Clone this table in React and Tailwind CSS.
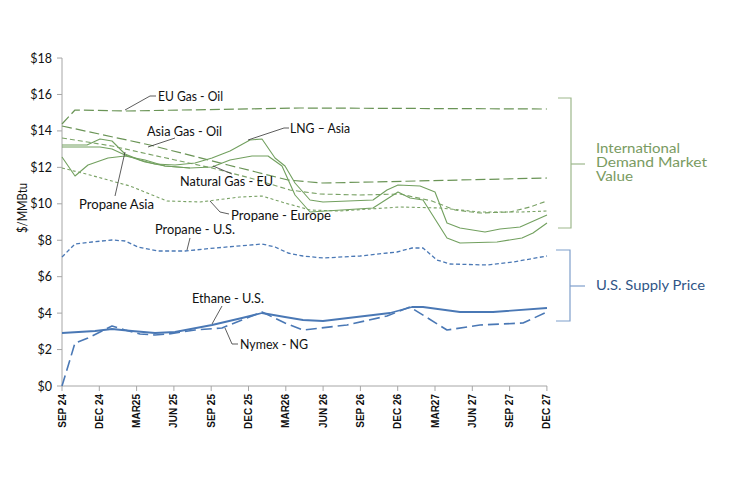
import React from "react";

// pixel points traced from the chart (x, y)
const series = [
  // green dashed
  { id: "euGasOil", color: "#6a9456", width: 1.2, dash: "10 4",
    pts: [[62,124],[75,110],[125,111],[300,108],[547,109]] },
  { id: "asiaGasOil", color: "#6a9456", width: 1.2, dash: "10 4",
    pts: [[62,126],[150,145],[228,165],[288,180],[322,183],[373,182],[547,178]] },
  { id: "natGasEu", color: "#7aa266", width: 1.1, dash: "5 3",
    pts: [[62,138],[112,146],[175,160],[212,168],[250,178],[290,190],[320,194],[360,195],[400,194],[432,201],[455,210],[480,213],[510,212],[530,207],[547,201]] },
  { id: "propaneEurope", color: "#7aa266", width: 1.1, dash: "3 2.5",
    pts: [[62,168],[90,175],[130,186],[167,201],[200,202],[240,197],[262,196],[285,203],[310,210],[340,211],[400,207],[440,208],[480,212],[520,212],[547,211]] },
  // green solid
  { id: "lngAsia", color: "#72a05f", width: 1.1,
    pts: [[62,145],[87,145],[100,139],[112,141],[125,154],[140,160],[155,164],[175,165],[195,163],[212,158],[230,151],[250,140],[262,139],[275,158],[285,166],[295,183],[310,200],[323,202],[373,200],[387,190],[398,185],[420,186],[435,192],[447,223],[460,228],[485,232],[500,229],[520,227],[547,215]] },
  { id: "propaneAsia", color: "#72a05f", width: 1.1,
    pts: [[62,157],[75,176],[88,165],[108,158],[125,156],[145,160],[165,166],[190,168],[212,167],[230,160],[252,156],[268,156],[282,166],[295,195],[310,212],[373,208],[398,192],[410,198],[423,200],[447,238],[460,243],[497,242],[522,238],[533,233],[547,223]] },
  { id: "natGasSolid", color: "#72a05f", width: 1.1,
    pts: [[62,147],[100,147],[112,149],[125,155],[145,162],[165,166],[190,168]] },
  // blue
  { id: "propaneUs", color: "#4a78b5", width: 1.3, dash: "4 2.5",
    pts: [[62,257],[75,244],[92,242],[112,240],[125,241],[138,247],[158,251],[185,251],[215,248],[262,244],[275,247],[288,253],[303,256],[323,258],[360,256],[397,252],[412,248],[423,248],[437,260],[450,264],[487,265],[513,262],[547,256]] },
  { id: "nymex", color: "#4a78b5", width: 1.6, dash: "11 5",
    pts: [[62,386],[75,343],[88,338],[102,331],[112,326],[125,330],[140,334],[155,335],[168,334],[195,330],[222,328],[242,320],[262,312],[285,323],[303,330],[347,325],[387,316],[410,307],[447,330],[480,325],[523,323],[547,312]] },
  { id: "ethane", color: "#4a78b5", width: 1.8,
    pts: [[62,333],[95,331],[112,329],[132,331],[155,333],[175,332],[212,325],[242,318],[262,313],[285,317],[303,320],[323,321],[390,313],[412,307],[423,307],[460,312],[493,312],[547,308]] },
];

const xLabels = ["SEP 24","DEC 24","MAR25","JUN 25","SEP 25","DEC 25","MAR26","JUN 26","SEP 26","DEC 26","MAR27","JUN 27","SEP 27","DEC 27"];

const notes = [
  { text: "EU Gas - Oil", x: 158, y: 101, w: 65, lead: "125,110 150,96 156,96" },
  { text: "Asia Gas - Oil", x: 147, y: 136, w: 75, lead: "148,147 175,138" },
  { text: "LNG \u2013 Asia", x: 290, y: 133, w: 60, lead: "248,140 284,128 289,128" },
  { text: "Natural Gas - EU", x: 180, y: 186, w: 93, lead: "213,166 232,174" },
  { text: "Propane Asia", x: 79, y: 209, w: 75, lead: "115,196 125,152" },
  { text: "Propane - Europe", x: 231, y: 220, w: 100, lead: "210,201 220,212 229,214" },
  { text: "Propane - U.S.", x: 155, y: 234, w: 80, lead: "190,238 187,250" },
  { text: "Ethane - U.S.", x: 192, y: 303, w: 72, lead: "222,306 212,324" },
  { text: "Nymex - NG", x: 240, y: 349, w: 68, lead: "225,328 232,344 238,344" },
];

const font = "'Lato', 'Open Sans', sans-serif";

export default function App() {
  const yTicks = Array.from({ length: 10 }, (_, k) => 386 - k * 36.44);
  const xTicks = Array.from({ length: 14 }, (_, k) => 62 + k * 37.3);

  return (
    <div className="w-[731px] h-[483px] bg-white overflow-hidden">
      <svg width="731" height="483" viewBox="0 0 731 483" className="block">
        {/* axes */}
        <line x1="62" y1="58" x2="62" y2="386" stroke="#a6a6a6" strokeWidth="1" />
        <line x1="62" y1="386" x2="547" y2="386" stroke="#a6a6a6" strokeWidth="1" />
        {yTicks.map((y, k) => (
          <g key={k}>
            <line x1="57" y1={y} x2="62" y2={y} stroke="#a6a6a6" />
            <text x="52" y={y + 4.5} textAnchor="end" fontSize="12.5" fontFamily={font} fill="#111">
              {"$" + k * 2}
            </text>
          </g>
        ))}
        {xTicks.map((x, k) => (
          <g key={k}>
            <line x1={x} y1="386" x2={x} y2="391" stroke="#a6a6a6" />
            <text
              transform={`translate(${x + 3.5} 394) rotate(-90)`}
              textAnchor="end"
              fontSize="10"
              fontWeight="bold"
              fontFamily="'Liberation Sans', Arial, sans-serif"
              fill="#111"
            >
              {xLabels[k]}
            </text>
          </g>
        ))}
        <text
          transform="translate(27 208) rotate(-90)"
          textAnchor="middle"
          fontSize="12.5"
          fontFamily={font}
          fill="#111"
          textLength="50"
          lengthAdjust="spacingAndGlyphs"
        >
          $/MMBtu
        </text>

        {/* data */}
        {series.map((s) => (
          <polyline
            key={s.id}
            points={s.pts.map((p) => p.join(",")).join(" ")}
            fill="none"
            stroke={s.color}
            strokeWidth={s.width}
            strokeDasharray={s.dash}
            strokeLinejoin="round"
          />
        ))}

        {/* annotations */}
        {notes.map((n) => (
          <g key={n.text}>
            <polyline points={n.lead} fill="none" stroke="#333" strokeWidth="0.8" />
            <text
              x={n.x}
              y={n.y}
              fontSize="12.5"
              fontFamily={font}
              fill="#111"
              textLength={n.w}
              lengthAdjust="spacingAndGlyphs"
            >
              {n.text}
            </text>
          </g>
        ))}

        {/* brackets */}
        <polyline points="558,98 571,98 571,228 558,228" fill="none" stroke="#9db88c" strokeWidth="1.2" />
        <line x1="571" y1="164" x2="585" y2="164" stroke="#9db88c" strokeWidth="1.2" />
        <polyline points="556,250 570,250 570,321 556,321" fill="none" stroke="#7f9fcb" strokeWidth="1.2" />
        <line x1="570" y1="286" x2="585" y2="286" stroke="#7f9fcb" strokeWidth="1.2" />

        <g fontSize="12.5" fontFamily={font} fill="#7a9b62">
          <text x="596" y="153" textLength="84" lengthAdjust="spacingAndGlyphs">International</text>
          <text x="596" y="167" textLength="111" lengthAdjust="spacingAndGlyphs">Demand Market</text>
          <text x="596" y="181" textLength="37" lengthAdjust="spacingAndGlyphs">Value</text>
        </g>
        <text
          x="596"
          y="290"
          fontSize="13"
          fontFamily={font}
          fill="#2f5586"
          textLength="109"
          lengthAdjust="spacingAndGlyphs"
        >
          U.S. Supply Price
        </text>
      </svg>
    </div>
  );
}
